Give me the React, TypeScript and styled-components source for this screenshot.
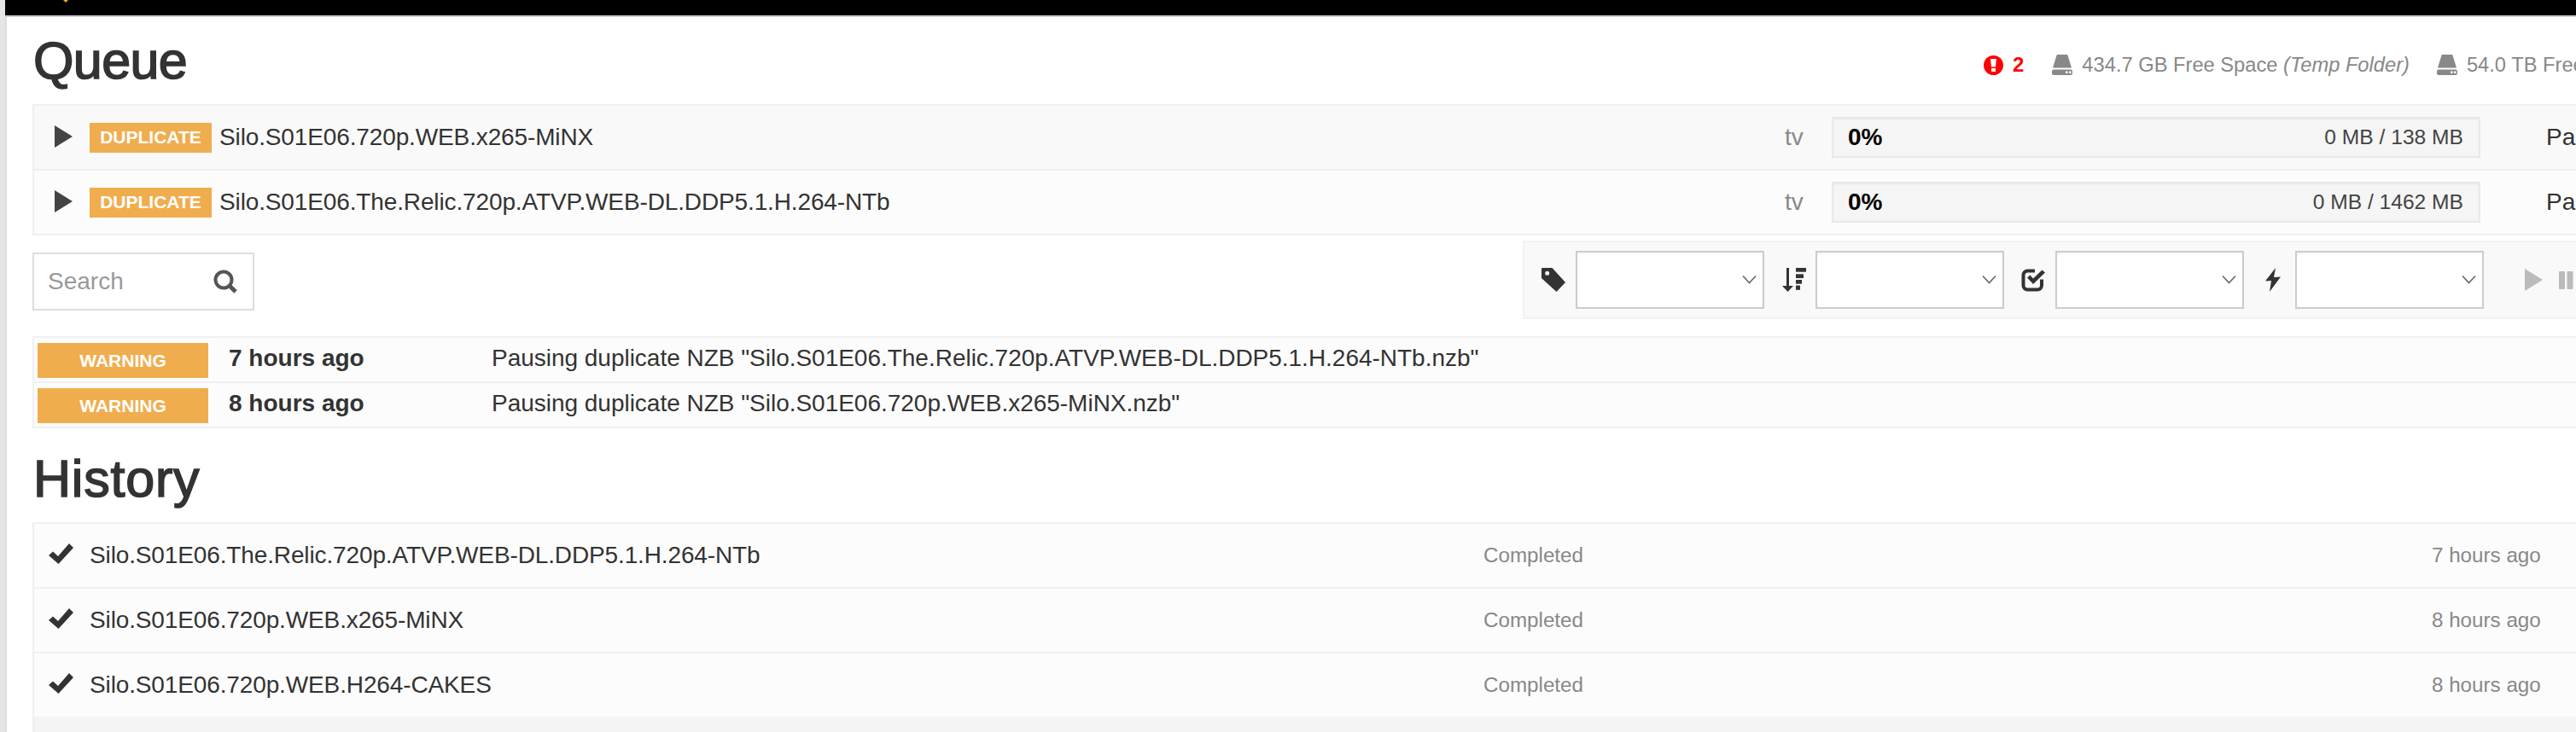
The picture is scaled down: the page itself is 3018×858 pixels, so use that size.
import React from "react";
import styled, { createGlobalStyle } from "styled-components";

const Global = createGlobalStyle`
  html, body { margin: 0; padding: 0; height: 858px; overflow: hidden; background: #e5e5e5; }
  body { font-family: "Liberation Sans", Arial, sans-serif; color: #333; font-size: 28px; }
  * { box-sizing: border-box; }
`;

const Shell = styled.div`
  margin-left: 6px;
  width: 3200px;
  height: 858px;
  overflow: hidden;
`;
const TopBar = styled.header`
  height: 20px;
  background: #000;
  border-bottom: 2px solid #ccc;
  position: relative;
`;
const LogoTip = styled.span`
  position: absolute;
  left: 68px;
  top: 0;
  width: 6px;
  height: 3px;
  background: #f5a623;
  clip-path: polygon(0 0, 100% 0, 50% 100%);
`;
const Main = styled.main`
  background: #fff;
  border-left: 2px solid #ddd;
  padding-left: 30px;
  height: 838px;
`;
const QueueHead = styled.div`
  display: grid;
  grid-template-columns: 2286px 1fr;
  align-items: start;
  height: 102px;
`;
const Title = styled.h1`
  margin: 0;
  font-size: 61px;
  line-height: 70px;
  font-weight: 400;
  color: #333;
  -webkit-text-stroke: 1.6px #333;
  padding-left: 1px;
`;
const QueueTitle = styled(Title)`
  padding-top: 16px;
  letter-spacing: -0.6px;
`;
const HistoryTitle = styled(Title)`
  padding-top: 24px;
  height: 110px;
  letter-spacing: 0.8px;
`;
const Stats = styled.div`
  display: flex;
  align-items: center;
  height: 24px;
  margin-top: 44px;
  white-space: nowrap;
  font-size: 23.7px;
  color: #888;
`;
const ErrorCount = styled.span`
  display: flex;
  align-items: center;
  gap: 11px;
  color: #f00;
  font-weight: 700;
  font-size: 24px;
  margin-right: 33px;
`;
const DiskStat = styled.span`
  display: flex;
  align-items: center;
  gap: 11px;
  margin-right: 32px;
`;
const Table = styled.div`
  border: 2px solid #f0f0f0;
  border-right: 0;
  width: 3100px;
`;
const QueueRow = styled.div<{ $striped?: boolean }>`
  display: grid;
  grid-template-columns: 2051px 55px 760px 77px 1fr;
  align-items: center;
  height: 74px;
  background: ${(p) => (p.$striped ? "#f9f9f9" : "#fcfcfc")};
  & + & { border-top: 2px solid #f0f0f0; height: 76px; }
`;
const NameCell = styled.div`
  display: flex;
  align-items: center;
  padding-left: 24px;
  white-space: nowrap;
  letter-spacing: -0.13px;
`;
const PlayButton = styled.svg`
  width: 21px;
  height: 26px;
  fill: #444;
  margin-right: 20px;
  margin-top: -3px;
  flex: none;
`;
const Label = styled.span`
  display: flex;
  align-items: center;
  justify-content: center;
  background: #f0ad4e;
  color: #fff;
  font-weight: 700;
  font-size: 21px;
  letter-spacing: 0;
`;
const DuplicateLabel = styled(Label)`
  width: 143px;
  height: 35px;
  margin-right: 9px;
  flex: none;
`;
const CategoryCell = styled.div`
  color: #888;
`;
const Progress = styled.div`
  height: 48px;
  background: #f5f5f5;
  border: 2px solid #e9e9e9;
  box-shadow: inset 0 1px 2px rgba(0, 0, 0, 0.06);
  display: flex;
  align-items: center;
  justify-content: space-between;
  padding: 0 18px 0 17px;
`;
const Percent = styled.b`
  color: #000;
  font-size: 28px;
`;
const Size = styled.span`
  color: #444;
  font-size: 24.6px;
`;
const StatusCell = styled.div`
  color: #333;
  white-space: nowrap;
`;
const Controls = styled.div`
  display: flex;
  justify-content: space-between;
  align-items: flex-start;
  width: 3100px;
  margin-top: 6px;
`;
const SearchBox = styled.div`
  width: 260px;
  height: 68px;
  border: 2px solid #ddd;
  margin-top: 14px;
  display: flex;
  align-items: center;
  padding: 0 18px 0 16px;
`;
const SearchInput = styled.input`
  flex: 1;
  min-width: 0;
  border: 0;
  outline: 0;
  background: transparent;
  padding: 0;
  font: 400 28px "Liberation Sans", Arial, sans-serif;
  color: #333;
  &::placeholder { color: #999; opacity: 1; }
`;
const SearchIcon = styled.svg`
  width: 28px;
  height: 28px;
  flex: none;
`;
const Toolbar = styled.div`
  width: 1354px;
  height: 92px;
  background: #f9f9f9;
  border: 2px solid #f2f2f2;
  border-right: 0;
  display: flex;
  align-items: center;
  padding-left: 20px;
`;
const FilterIcon = styled.svg<{ $w: number }>`
  width: ${(p) => p.$w}px;
  height: 28px;
  flex: none;
  fill: #333;
`;
const IconSlot = styled.span`
  width: 60px;
  padding-left: 8px;
  display: flex;
  justify-content: center;
  flex: none;
  &:first-child { width: 40px; padding-left: 0; justify-content: flex-start; }
`;
const SelectBox = styled.div`
  position: relative;
  width: 221px;
  height: 68px;
  flex: none;
`;
const Select = styled.select`
  appearance: none;
  width: 100%;
  height: 100%;
  border: 2px solid #ccc;
  border-radius: 0;
  background: #fff;
  box-shadow: inset 0 2px 2px rgba(0, 0, 0, 0.04);
  outline: 0;
`;
const Chevron = styled.svg`
  position: absolute;
  right: 9px;
  top: 28px;
  width: 17px;
  height: 11px;
  fill: none;
  stroke: #666;
  stroke-width: 1.6;
  pointer-events: none;
`;
const ActionGroup = styled.div`
  display: flex;
  align-items: center;
  margin-left: 48px;
  gap: 19px;
`;
const ActionPlay = styled.svg`
  width: 21px;
  height: 26px;
  fill: #bbb;
`;
const ActionPause = styled.svg`
  width: 17px;
  height: 21px;
  fill: #bbb;
`;
const WarningTable = styled(Table)`
  margin-top: 20px;
`;
const WarningRow = styled.div`
  display: grid;
  grid-template-columns: 200px 332px 1fr;
  align-items: center;
  height: 51px;
  padding: 6px 0 4px 4px;
  background: #fcfcfc;
  white-space: nowrap;
  & + & { border-top: 2px solid #f0f0f0; height: 53px; padding-top: 6px; }
`;
const WarningLabel = styled(Label)`
  height: 41px;
`;
const WarningTime = styled.b`
  padding-left: 24px;
  font-size: 28px;
  margin-top: -5px;
`;
const WarningText = styled.span`
  margin-top: -5px;
  letter-spacing: -0.02px;
`;
const HistoryRow = styled.div`
  display: grid;
  grid-template-columns: 1698px 1111px 1fr;
  align-items: center;
  height: 74px;
  background: #fcfcfc;
  & + & { border-top: 2px solid #f0f0f0; height: 76px; }
`;
const HistoryName = styled.div`
  display: flex;
  align-items: center;
  padding-left: 17px;
  white-space: nowrap;
  letter-spacing: -0.13px;
`;
const CheckIcon = styled.svg`
  width: 29px;
  height: 24px;
  fill: #333;
  margin-right: 19px;
  flex: none;
  margin-top: -4px;
`;
const Muted = styled.span`
  font-size: 24.2px;
  color: #888;
  white-space: nowrap;
`;
const NextRow = styled.div`
  height: 40px;
  background: #f4f4f4;
`;

const queue = [
  { name: "Silo.S01E06.720p.WEB.x265-MiNX", size: "0 MB / 138 MB" },
  { name: "Silo.S01E06.The.Relic.720p.ATVP.WEB-DL.DDP5.1.H.264-NTb", size: "0 MB / 1462 MB" },
];
const warnings = [
  { time: "7 hours ago", text: 'Pausing duplicate NZB "Silo.S01E06.The.Relic.720p.ATVP.WEB-DL.DDP5.1.H.264-NTb.nzb"' },
  { time: "8 hours ago", text: 'Pausing duplicate NZB "Silo.S01E06.720p.WEB.x265-MiNX.nzb"' },
];
const history = [
  { name: "Silo.S01E06.The.Relic.720p.ATVP.WEB-DL.DDP5.1.H.264-NTb", time: "7 hours ago" },
  { name: "Silo.S01E06.720p.WEB.x265-MiNX", time: "8 hours ago" },
  { name: "Silo.S01E06.720p.WEB.H264-CAKES", time: "8 hours ago" },
];

const DiskIcon = () => (
  <svg width="24" height="24" viewBox="0 0 24 24">
    <path d="M6.5 0h11a1 1 0 0 1 1 .8L23 15.5H1L5.5.8a1 1 0 0 1 1-.8z" fill="#888" />
    <path d="M2 17.5h20a2 2 0 0 1 2 2V22a2 2 0 0 1-2 2H2a2 2 0 0 1-2-2v-2.500a2 2 0 0 1 2-2z" fill="#888" />
    <rect x="16" y="19.500" width="2.500" height="2.500" fill="#fff" />
    <rect x="20" y="19.500" width="2.500" height="2.500" fill="#fff" />
  </svg>
);

const ErrorIcon = () => (
  <svg width="23" height="23" viewBox="0 0 23 23">
    <circle cx="11.500" cy="11.500" r="11.500" fill="#f00" />
    <path d="M8 4h7l-1 9.500H9z" fill="#fff" />
    <rect x="9" y="15" width="5" height="4" fill="#fff" />
  </svg>
);

const Filter = ({ icon }: { icon: React.ReactNode }) => (
  <>
    <IconSlot>{icon}</IconSlot>
    <SelectBox>
      <Select aria-label="filter" defaultValue="">
        <option value="" />
      </Select>
      <Chevron viewBox="0 0 17 11">
        <path d="M1 1.500l7.500 8 7.500-8" />
      </Chevron>
    </SelectBox>
  </>
);

export default function App() {
  return (
    <>
      <Global />
      <Shell>
        <TopBar>
          <LogoTip />
        </TopBar>
        <Main>
          <QueueHead>
            <QueueTitle>Queue</QueueTitle>
            <Stats>
              <ErrorCount>
                <ErrorIcon />2
              </ErrorCount>
              <DiskStat>
                <DiskIcon />
                <span>
                  434.7 GB Free Space <i>(Temp Folder)</i>
                </span>
              </DiskStat>
              <DiskStat>
                <DiskIcon />
                <span>54.0 TB Free Space</span>
              </DiskStat>
            </Stats>
          </QueueHead>

          <Table>
            {queue.map((q, i) => (
              <QueueRow key={q.name} $striped={i === 0}>
                <NameCell>
                  <PlayButton viewBox="0 0 21 26">
                    <path d="M0 0l21 13L0 26z" />
                  </PlayButton>
                  <DuplicateLabel>DUPLICATE</DuplicateLabel>
                  {q.name}
                </NameCell>
                <CategoryCell>tv</CategoryCell>
                <Progress>
                  <Percent>0%</Percent>
                  <Size>{q.size}</Size>
                </Progress>
                <span />
                <StatusCell>Paused</StatusCell>
              </QueueRow>
            ))}
          </Table>

          <Controls>
            <SearchBox>
              <SearchInput placeholder="Search" />
              <SearchIcon viewBox="0 0 28 28">
                <circle cx="12" cy="12" r="9.500" fill="none" stroke="#555" strokeWidth="4" />
                <path d="M18.500 18.500L26 26" stroke="#555" strokeWidth="5" />
              </SearchIcon>
            </SearchBox>
            <Toolbar>
              <Filter
                icon={
                  <FilterIcon $w={28} viewBox="0 0 28 28">
                    <path
                      fillRule="evenodd"
                      d="M1 0h11.500l15.500 17L17.500 28 0 12V1a1 1 0 0 1 1-1zm5.700 3.800a2.500 2.500 0 1 0 0 5 2.500 2.500 0 0 0 0-5z"
                    />
                  </FilterIcon>
                }
              />
              <Filter
                icon={
                  <FilterIcon $w={29} viewBox="0 0 29 28">
                    <path d="M6 0h3v21h5l-6.500 7L1 21h5z" />
                    <rect x="17" y="0" width="12" height="4.700" />
                    <rect x="17" y="7.300" width="9" height="4.700" />
                    <rect x="17" y="14" width="7" height="4.700" />
                    <rect x="17" y="20.600" width="5" height="5.200" />
                  </FilterIcon>
                }
              />
              <Filter
                icon={
                  <FilterIcon $w={28} viewBox="0 0 28 28">
                    <path
                      d="M16 3.500H7.500a5 5 0 0 0-5 5v12a5 5 0 0 0 5 5h11.500a5 5 0 0 0 5-5v-7"
                      fill="none"
                      stroke="#333"
                      strokeWidth="4"
                    />
                    <path d="M7 11.500l3.500-3 3.500 4L24.500 2.500 28 5.500 14 19z" />
                  </FilterIcon>
                }
              />
              <Filter
                icon={
                  <FilterIcon $w={18} viewBox="0 0 18 28">
                    <path d="M12 0L0 15.500l7-.5-2 13L18 10.500l-8 .5z" />
                  </FilterIcon>
                }
              />
              <ActionGroup>
                <ActionPlay viewBox="0 0 21 26">
                  <path d="M0 0l21 13L0 26z" />
                </ActionPlay>
                <ActionPause viewBox="0 0 17 21">
                  <rect x="0" y="0" width="7" height="21" rx="1" />
                  <rect x="9.500" y="0" width="7" height="21" rx="1" />
                </ActionPause>
              </ActionGroup>
            </Toolbar>
          </Controls>

          <WarningTable>
            {warnings.map((w) => (
              <WarningRow key={w.time}>
                <WarningLabel>WARNING</WarningLabel>
                <WarningTime>{w.time}</WarningTime>
                <WarningText>{w.text}</WarningText>
              </WarningRow>
            ))}
          </WarningTable>

          <HistoryTitle>History</HistoryTitle>

          <Table>
            {history.map((h) => (
              <HistoryRow key={h.name}>
                <HistoryName>
                  <CheckIcon viewBox="0 0 29 24">
                    <path d="M0 14l5-4.500 6 5.500L24 0l5 5-17.500 19z" />
                  </CheckIcon>
                  {h.name}
                </HistoryName>
                <Muted>Completed</Muted>
                <Muted>{h.time}</Muted>
              </HistoryRow>
            ))}
            <NextRow />
          </Table>
        </Main>
      </Shell>
    </>
  );
}
